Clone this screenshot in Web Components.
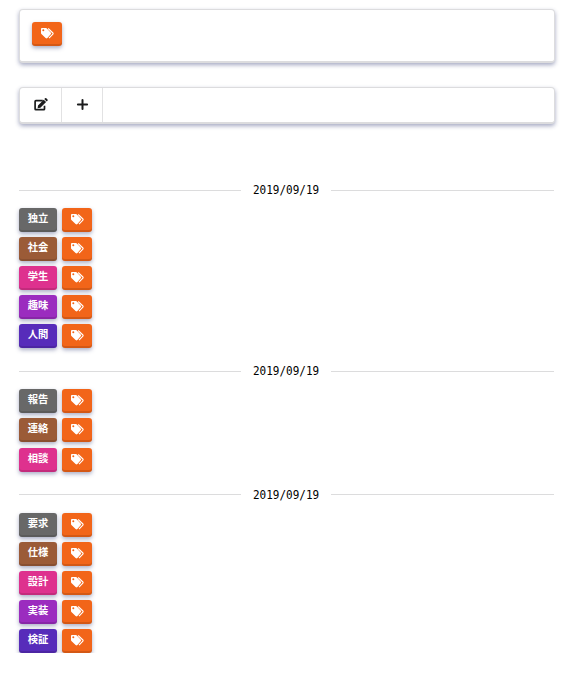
<!DOCTYPE html>
<html lang="ja">
<head>
<meta charset="utf-8">
<title>Tags</title>
<style>
body{margin:0;background:#fff;color:#000;font-family:"Noto Sans CJK JP",sans-serif}
</style>
</head>
<body>
<tag-app></tag-app>
<script>
const ICONS = {
  tags: ['0 0 13 11', '<path fill-rule="evenodd" d="M.9 0H5a1.3 1.3 0 0 1 .9.4L9.700 4.500a1.3 1.3 0 0 1 0 1.800L6.400 10a1.300 1.300 0 0 1-1.800 0L.4 5.900A1.300 1.300 0 0 1 0 5V.9A.9.9 0 0 1 .9 0zM2.300 1.300a1 1 0 1 0 0 2 1 1 0 0 0 0-2z"/><path d="M7.200.5l4.700 4.500a.8.8 0 0 1 0 1.100L8 10.200" fill="none" stroke="currentColor" stroke-width="1.100"/>'],
  edit: ['0 0 14 13', '<path d="M8.800 2.600H1.900a.8.8 0 0 0-.8.8v7.500a.8.8 0 0 0 .8.8h7.800a.8.8 0 0 0 .8-.8V7.800" fill="none" stroke="currentColor" stroke-width="1.700"/><path d="M4 7.400L9.700 1.700l2.400 2.400L6.400 9.800 3.600 10.200zM10.300 1.100l.8-.8a.9.9 0 0 1 1.200 0l1.200 1.200a.9.9 0 0 1 0 1.200l-.8.8z"/>'],
  plus: ['0 0 11 11', '<path d="M5.500.9v9.200M.9 5.500h9.200" fill="none" stroke="currentColor" stroke-width="2" stroke-linecap="round"/>']
};
const define = (name, css, html) => customElements.define(name, class extends HTMLElement {
  connectedCallback() {
    if (this.shadowRoot) return;
    this.attachShadow({mode: 'open'}).innerHTML = `<style>${css}</style>${html(this)}`;
  }
});

define('ui-icon', ':host{display:flex}svg{display:block;fill:currentColor;overflow:visible}', el => {
  const [box, shapes] = ICONS[el.getAttribute('name')];
  return `<svg viewBox="${box}" width="${el.getAttribute('w')}" height="${el.getAttribute('h')}">${shapes}</svg>`;
});

define('ui-panel', `
:host{display:flex;box-sizing:border-box;background:#fff;border-radius:4px;
 border:1px solid #dcdcde;border-bottom-width:2px;
 box-shadow:0 2px 4px rgba(40,50,110,.42)}
`, () => '<slot></slot>');

define('ui-button', `
:host{display:flex;box-sizing:border-box;align-items:center;justify-content:center;
 width:var(--w,38px);height:24px;padding-bottom:5px;border-radius:3px;background:var(--c);color:#fff;
 font:700 10.3px/19px "Noto Sans CJK JP",sans-serif;
 box-shadow:inset 0 -2px 0 rgba(0,0,0,.12),0 2px 4px rgba(40,50,110,.4)}
`, () => '<slot></slot>');

define('tag-button', ':host{display:block}ui-button{--w:30px;--c:#f26519;padding-bottom:1px}', () =>
  '<ui-button><ui-icon name="tags" w="13" h="11"></ui-icon></ui-button>');

define('tool-item', `
:host{display:flex;align-items:center;justify-content:center;box-sizing:border-box;padding-bottom:1px;border-right:1px solid #e2e2e3;color:#1b1c1d}
`, () => '<slot></slot>');

define('date-divider', `
:host{display:flex;align-items:center;gap:12px;height:18px;font:12px/18px "DejaVu Sans Mono",monospace}
:host::before,:host::after{content:"";flex:1 1 0;height:1px;background:#dcdcdd}
:host::after{flex-basis:1.5px}
span{width:66px;white-space:nowrap;transform:scaleX(.915);transform-origin:0 50%}
`, () => '<span><slot></slot></span>');

define('tag-row', ':host{display:flex;gap:5px}', el =>
  `<ui-button style="--c:${el.getAttribute('color')}"><slot></slot></ui-button><tag-button></tag-button>`);

define('tag-group', ':host{display:block}.rows{display:flex;flex-direction:column;gap:5.1px;padding-top:9px}', el => {
  const colors = ['#686868', '#9b5b37', '#de318e', '#9b2cbf', '#572cba'];
  const rows = el.getAttribute('tags').split(' ').map((t, i) => `<tag-row color="${colors[i]}">${t}</tag-row>`).join('');
  return `<date-divider>${el.getAttribute('date')}</date-divider><div class="rows">${rows}</div>`;
});

define('tag-app', `
:host{display:block;padding:9px 19px 0}
.search{height:54px;padding:12px;align-items:flex-start}
.tools{height:37px;margin-top:24px}
.edit{width:42px}.plus{width:41px}
main{display:flex;flex-direction:column;gap:14px;padding-top:57px;margin-right:1px}
`, () => `
<ui-panel class="search"><tag-button></tag-button></ui-panel>
<ui-panel class="tools"><tool-item class="edit"><ui-icon name="edit" w="14" h="13"></ui-icon></tool-item><tool-item class="plus"><ui-icon name="plus" w="11" h="11"></ui-icon></tool-item></ui-panel>
<main>
<tag-group date="2019/09/19" tags="独立 社会 学生 趣味 人間"></tag-group>
<tag-group date="2019/09/19" tags="報告 連絡 相談"></tag-group>
<tag-group date="2019/09/19" tags="要求 仕様 設計 実装 検証"></tag-group>
</main>`);
</script>
</body>
</html>
